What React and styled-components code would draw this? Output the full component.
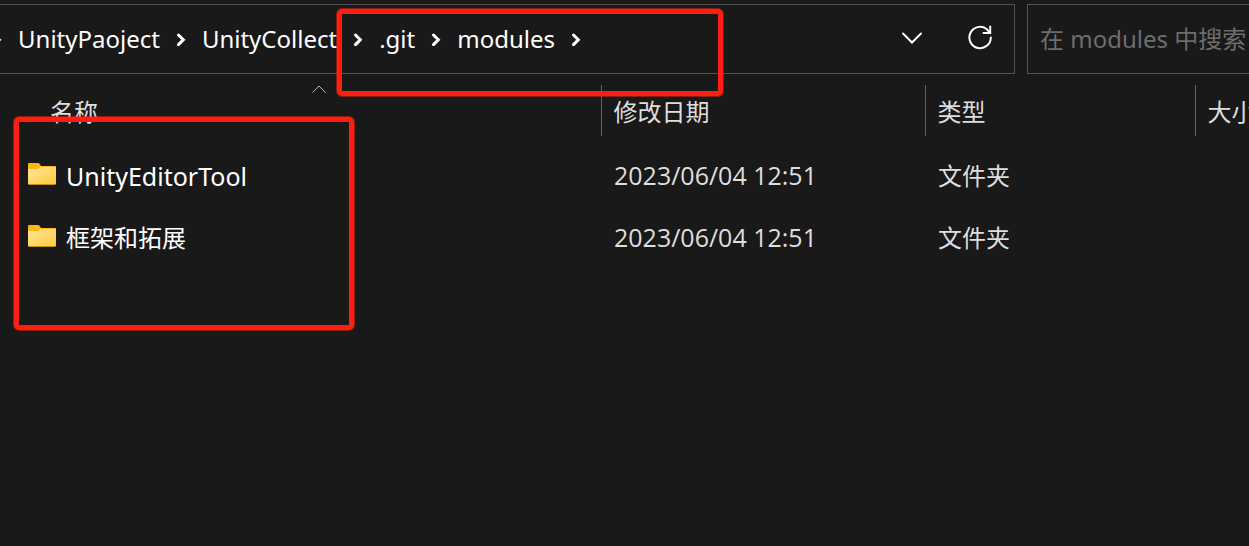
import React from "react";
import styled, { createGlobalStyle } from "styled-components";

const GlobalStyle = createGlobalStyle`
  * { box-sizing: border-box; }
  body {
    margin: 0;
    background: #191919;
    color: #fff;
    font-family: "Noto Sans", "Noto Sans CJK SC", sans-serif;
    font-size: 24px;
    line-height: 32px;
    overflow: hidden;
  }
`;

const Window = styled.main`
  position: relative;
  min-height: 100vh;
  padding-top: 4px;
  overflow: hidden;
`;

const Toolbar = styled.div`
  display: flex;
  gap: 12px;
  height: 70px;
`;

const AddressBar = styled.div`
  flex: 1;
  display: flex;
  align-items: center;
  min-width: 0;
  border: 1px solid #535353;
  border-left: 0;
`;

const Crumbs = styled.nav`
  flex: 1;
  display: flex;
  align-items: center;
  gap: 16px;
  overflow: hidden;
`;

const Crumb = styled.a`
  color: #fff;
  text-decoration: none;
  white-space: nowrap;
`;

const CrumbArrow = styled.svg`
  flex: none;
  width: 10px;
  height: 14px;
  fill: none;
  stroke: #fff;
  stroke-width: 3;
  stroke-linecap: round;
  &:first-child { margin-left: -8px; }
`;

const IconButton = styled.button`
  display: grid;
  place-items: center;
  width: 68px;
  height: 68px;
  padding: 0 0 2px;
  border: 0;
  background: none;
  color: #fff;
  svg { fill: none; stroke: currentColor; stroke-width: 2; stroke-linecap: round; }
`;

const SearchInput = styled.input`
  width: 222px;
  padding: 0 0 0 12px;
  border: 1px solid #535353;
  border-right: 0;
  background: none;
  color: #fff;
  font: inherit;
  &::placeholder { color: #6d6d6d; opacity: 1; }
`;

const FileTable = styled.table`
  width: 100%;
  margin-top: 11px;
  border-collapse: collapse;
  table-layout: fixed;
`;

const Column = styled.col`
  width: ${(p) => p.$width};
`;

const HeaderCell = styled.th`
  height: 51px;
  padding: 2px 0 0 ${(p) => (p.$first ? "50px" : "12px")};
  border-left: ${(p) => (p.$first ? "0" : "1px solid #636363")};
  color: #dedede;
  font-weight: 400;
  text-align: left;
  white-space: nowrap;
  position: relative;
`;

const SortMark = styled.svg`
  position: absolute;
  top: 0;
  left: 38px;
  right: 0;
  margin: 0 auto;
  width: 14px;
  height: 8px;
  fill: none;
  stroke: #b4b4b4;
`;

const Rows = styled.tbody`
  &::before { content: ""; display: table-row; height: 9px; }
`;

const Cell = styled.td`
  height: 62px;
  padding: 0 0 0 13px;
  color: #dedede;
  white-space: nowrap;
`;

const DateCell = styled(Cell)`
  padding-bottom: 2px;
  font-family: "Open Sans", "Noto Sans", sans-serif;
  font-size: 25px;
`;

const NameCell = styled(Cell)`
  padding-left: 28px;
  color: #fff;
`;

const FileName = styled.span`
  display: flex;
  align-items: center;
  gap: 10px;
  font-size: ${(p) => (p.$latin ? "25px" : "24px")};
`;

const Marker = styled.div`
  position: absolute;
  left: ${(p) => p.$x}px;
  top: ${(p) => p.$y}px;
  width: ${(p) => p.$w}px;
  height: ${(p) => p.$h}px;
  border: 5px solid #ff1e10;
  border-radius: 5px;
  box-shadow: 0 0 0 1px #ff1e1080;
  pointer-events: none;
`;

const Arrow = () => (
  <CrumbArrow viewBox="0 0 10 14" aria-hidden="true">
    <path d="M2.500 3l4.800 4.800-4.800 4.800" />
  </CrumbArrow>
);

const Folder = () => (
  <svg width="28" height="26" viewBox="0 0 28 26" aria-hidden="true">
    <defs>
      <linearGradient id="folder" x1="0" y1="0" x2="1" y2="1">
        <stop offset="0" stopColor="#ffe79b" />
        <stop offset="1" stopColor="#ffca3d" />
      </linearGradient>
    </defs>
    <path d="M0 1a1 1 0 0 1 1-1h9q1.200 0 1.800 1.200l1.200 1.800H27.200a.8.8 0 0 1 .8.8V20.500a1.300 1.300 0 0 1-1.300 1.300H1.300A1.300 1.300 0 0 1 0 20.500z" fill="#fcb714" />
    <path d="M0 6h9.500q1 0 1.700-.8l1.100-1.200H28V20a1 1 0 0 1-1 1H1a1 1 0 0 1-1-1z" fill="url(#folder)" />
  </svg>
);

const path = ["UnityPaoject", "UnityCollect", ".git", "modules"];
const files = [
  { name: "UnityEditorTool", latin: true, date: "2023/06/04 12:51", type: "文件夹" },
  { name: "框架和拓展", latin: false, date: "2023/06/04 12:51", type: "文件夹" },
];

export default function App() {
  return (
    <Window>
      <GlobalStyle />
      <Toolbar>
        <AddressBar>
          <Crumbs>
            <Arrow />
            {path.map((part) => (
              <React.Fragment key={part}>
                <Crumb href="#">{part}</Crumb>
                <Arrow />
              </React.Fragment>
            ))}
          </Crumbs>
          <IconButton aria-label="历史记录">
            <svg width="20" height="12" viewBox="0 0 20 12"><path d="M1 1.500l9 9 9-9" /></svg>
          </IconButton>
          <IconButton aria-label="刷新">
            <svg width="24" height="26" viewBox="0 0 24 26"><path d="M22.800 12.500A10.700 10.700 0 1 1 18.600 4L22 7.800M22.200 1.500V8H15.500" /></svg>
          </IconButton>
        </AddressBar>
        <SearchInput type="text" aria-label="搜索" placeholder="在 modules 中搜索" />
      </Toolbar>
      <FileTable>
        <colgroup>
          <Column $width="601px" />
          <Column $width="324px" />
          <Column $width="270px" />
          <Column />
        </colgroup>
        <thead>
          <tr>
            <HeaderCell $first aria-sort="ascending">
              <SortMark viewBox="0 0 14 8" aria-hidden="true"><path d="M.5 7.500L7 1l6.500 6.500" /></SortMark>
              名称
            </HeaderCell>
            <HeaderCell>修改日期</HeaderCell>
            <HeaderCell>类型</HeaderCell>
            <HeaderCell>大小</HeaderCell>
          </tr>
        </thead>
        <Rows>
          {files.map((file) => (
            <tr key={file.name}>
              <NameCell><FileName $latin={file.latin}><Folder />{file.name}</FileName></NameCell>
              <DateCell>{file.date}</DateCell>
              <Cell>{file.type}</Cell>
              <Cell />
            </tr>
          ))}
        </Rows>
      </FileTable>
      <Marker $x={337} $y={9} $w={386} $h={87} />
      <Marker $x={14} $y={117} $w={340} $h={213} />
    </Window>
  );
}
